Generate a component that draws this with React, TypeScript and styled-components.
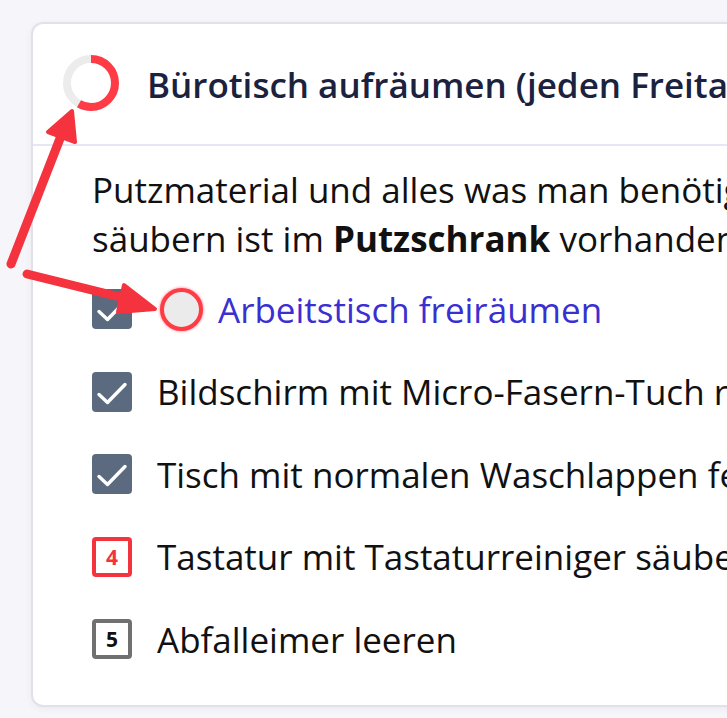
import React from "react";
import styled, { createGlobalStyle } from "styled-components";

const GlobalStyle = createGlobalStyle`
  html, body {
    margin: 0;
    padding: 0;
    background: #f6f6fa;
    overflow: hidden;
    font-family: "Open Sans", "Noto Sans", sans-serif;
  }
`;

type Step = {
  text: string;
  state: "done" | "open" | "alert";
  num?: number;
  active?: boolean;
};

const steps: Step[] = [
  { text: "Arbeitstisch freiräumen", state: "done", active: true },
  { text: "Bildschirm mit Micro-Fasern-Tuch reinigen", state: "done" },
  { text: "Tisch mit normalen Waschlappen feucht abwischen", state: "done" },
  { text: "Tastatur mit Tastaturreiniger säubern", state: "alert", num: 4 },
  { text: "Abfalleimer leeren", state: "open", num: 5 },
];

const App = () => {
  return (
    <Page>
      <GlobalStyle />
      <Card>
        <Header>
          <Progress viewBox="0 0 56 56">
            <circle cx="28" cy="28" r="24" fill="none" stroke="#ececec" strokeWidth="8" />
            <circle
              cx="28"
              cy="28"
              r="24"
              fill="none"
              stroke="#ff3b45"
              strokeWidth="8"
              strokeDasharray={`${2 * Math.PI * 24 * 0.58} 200`}
              transform="rotate(-90 28 28)"
            />
          </Progress>
          <Title>Bürotisch aufräumen (jeden Freitag)</Title>
        </Header>
        <Body>
          <Intro>
            Putzmaterial und alles was man benötigt, um den Bürotisch zu
            <br />
            säubern ist im <b>Putzschrank</b> vorhanden.
          </Intro>
          <List>
            {steps.map((s, i) => (
              <Row key={i}>
                {s.state === "done" ? (
                  <CheckBox>
                    <svg width="40" height="40" viewBox="0 0 40 40" fill="none">
                      <path d="M7 22.5l8.5 8L33 12.5" stroke="#fff" strokeWidth="3.4" strokeLinecap="round" strokeLinejoin="round" />
                    </svg>
                  </CheckBox>
                ) : (
                  <NumBox alert={s.state === "alert"}>{s.num}</NumBox>
                )}
                {s.active && <Marker />}
                <Label active={s.active}>{s.text}</Label>
              </Row>
            ))}
          </List>
        </Body>
      </Card>
      <Arrows width="727" height="718" viewBox="0 0 727 718">
        <g fill="#f5333f" stroke="#f5333f" strokeLinecap="round" strokeLinejoin="round">
          <line x1="11" y1="264" x2="61" y2="136" strokeWidth="9" />
          <polygon points="72,111 48,132 75,142" strokeWidth="4" />
          <line x1="27" y1="274" x2="128" y2="299" strokeWidth="9" />
          <polygon points="155,309 124,285 118,312" strokeWidth="4" />
        </g>
      </Arrows>
    </Page>
  );
};

const Page = styled.div`
  position: relative;
  width: 727px;
  height: 718px;
  padding: 22px 0 0 31px;
  box-sizing: border-box;
`;

const Card = styled.div`
  width: 1300px;
  background: #fff;
  border: 2px solid #e1e1e9;
  border-radius: 12px;
  box-shadow: 0 2px 6px rgba(30, 30, 60, 0.06);
`;

const Header = styled.div`
  display: flex;
  align-items: center;
  gap: 28px;
  height: 120px;
  padding-left: 30px;
  border-bottom: 2px solid #e7e6f5;
`;

const Progress = styled.svg`
  width: 56px;
  height: 56px;
  flex-shrink: 0;
  margin-top: -3px;
  filter: blur(0.6px);
`;

const Title = styled.div`
  font-size: 35px;
  font-weight: 600;
  color: #1b2240;
  white-space: nowrap;
`;

const Body = styled.div`
  padding: 19px 0 24px 59px;
`;

const Intro = styled.p`
  margin: 0;
  font-size: 35px;
  line-height: 49px;
  color: #111;
  white-space: nowrap;

  b {
    font-weight: 700;
  }
`;

const List = styled.div`
  display: flex;
  flex-direction: column;
  margin-top: 5px;
`;

const Row = styled.div`
  display: flex;
  align-items: center;
  height: 82.5px;
  gap: 25px;
`;

const CheckBox = styled.div`
  width: 40px;
  height: 40px;
  border-radius: 4px;
  background: #5b6a7e;
  display: flex;
  align-items: center;
  justify-content: center;
  flex-shrink: 0;
`;

const NumBox = styled.div<{ alert: boolean }>`
  width: 40px;
  height: 40px;
  box-sizing: border-box;
  border-radius: 4px;
  border: 4px solid ${(p) => (p.alert ? "#f5333f" : "#707070")};
  background: #fff;
  color: ${(p) => (p.alert ? "#f5333f" : "#111")};
  font-size: 21px;
  font-weight: 700;
  display: flex;
  align-items: center;
  justify-content: center;
  flex-shrink: 0;
`;

const Marker = styled.div`
  width: 43px;
  height: 43px;
  box-sizing: border-box;
  border-radius: 50%;
  background: #ebebeb;
  border: 4.5px solid #ff3b45;
  box-shadow: 0 0 3px rgba(255, 59, 69, 0.8);
  margin: 0 -10px 0 3px;
  flex-shrink: 0;
`;

const Label = styled.span<{ active?: boolean }>`
  font-size: 35px;
  color: ${(p) => (p.active ? "#3a2fd0" : "#111")};
  white-space: nowrap;
`;

const Arrows = styled.svg`
  position: absolute;
  left: 0;
  top: 0;
  pointer-events: none;
`;

export default App;
